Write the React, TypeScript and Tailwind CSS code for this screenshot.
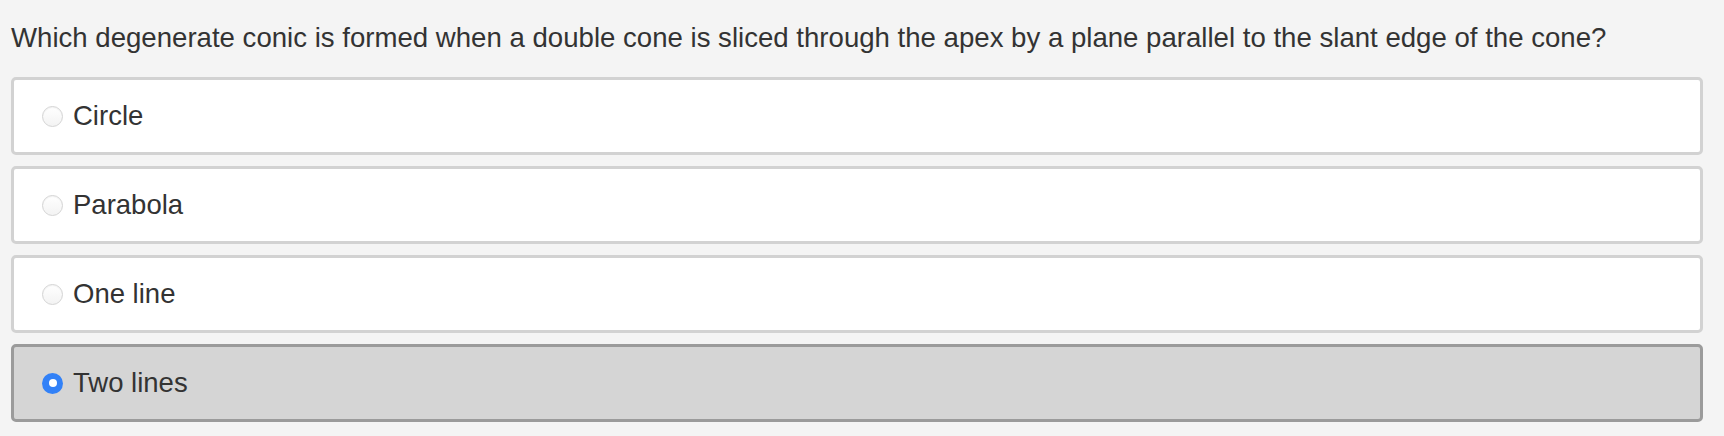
import { useState } from 'react';

const options = ['Circle', 'Parabola', 'One line', 'Two lines'];

function Radio({ checked }: { checked: boolean }) {
  if (checked) {
    return (
      <span className="flex h-[21px] w-[21px] shrink-0 items-center justify-center rounded-full bg-[#3281f7]">
        <span className="h-[8px] w-[8px] rounded-full bg-white" />
      </span>
    );
  }
  return (
    <span className="h-[21px] w-[21px] shrink-0 rounded-full border border-[#d4d4d4] bg-gradient-to-b from-white to-[#f3f3f3] shadow-[inset_0_1px_1px_rgba(0,0,0,0.05)]" />
  );
}

export default function App() {
  const [selected, setSelected] = useState(3);

  return (
    <div className="min-h-[436px] bg-[#f4f4f4] px-[11px] pt-[18px] font-['Liberation_Sans',Arial,sans-serif] text-[#333333]">
      <p className="mb-[20px] text-[27.6px] leading-[39px]">
        Which degenerate conic is formed when a double cone is sliced through the apex by a plane parallel to the slant edge of the cone?
      </p>
      <div className="flex w-[1692px] flex-col gap-[11px]">
        {options.map((opt, i) => {
          const isSel = selected === i;
          return (
            <label
              key={opt}
              onClick={() => setSelected(i)}
              className={`flex h-[78px] cursor-pointer items-center gap-[10px] rounded-[5px] border-[3px] pl-[28px] text-[27.5px] ${
                isSel ? 'border-[#9b9b9b] bg-[#d5d5d5]' : 'border-[#d2d2d2] bg-white'
              }`}
            >
              <Radio checked={isSel} />
              <span>{opt}</span>
            </label>
          );
        })}
      </div>
    </div>
  );
}
